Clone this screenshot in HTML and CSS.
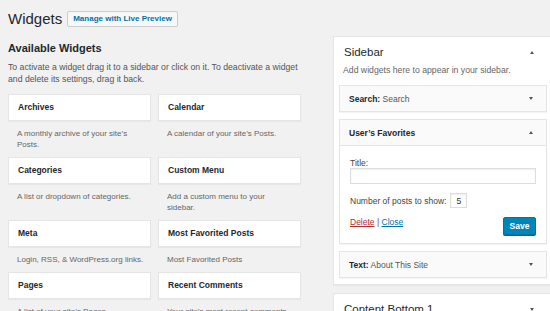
FILE: index.html
```html
<!DOCTYPE html>
<html lang="en">
<head>
    <meta charset="UTF-8">
    <meta name="viewport" content="width=device-width, initial-scale=1.0">
    <title>Widgets</title>
    <link rel="stylesheet" href="styles.css">
</head>
<body>
    <div class="wrap">
        <div class="page-header">
            <h1>Widgets</h1>
            <a class="header-button" href="#">Manage with Live Preview</a>
        </div>

        <div class="columns">
            <div class="available">
                <h2>Available Widgets</h2>
                <p class="intro">To activate a widget drag it to a sidebar or click on it. To deactivate a widget and delete its settings, drag it back.</p>

                <div class="widget-grid">
                    <div class="widget-item">
                        <div class="tile">Archives</div>
                        <p class="tile-desc">A monthly archive of your site’s Posts.</p>
                    </div>
                    <div class="widget-item">
                        <div class="tile">Calendar</div>
                        <p class="tile-desc">A calendar of your site’s Posts.</p>
                    </div>
                    <div class="widget-item">
                        <div class="tile">Categories</div>
                        <p class="tile-desc">A list or dropdown of categories.</p>
                    </div>
                    <div class="widget-item">
                        <div class="tile">Custom Menu</div>
                        <p class="tile-desc">Add a custom menu to your sidebar.</p>
                    </div>
                    <div class="widget-item">
                        <div class="tile">Meta</div>
                        <p class="tile-desc">Login, RSS, &amp; WordPress.org links.</p>
                    </div>
                    <div class="widget-item">
                        <div class="tile">Most Favorited Posts</div>
                        <p class="tile-desc">Most Favorited Posts</p>
                    </div>
                    <div class="widget-item">
                        <div class="tile">Pages</div>
                        <p class="tile-desc">A list of your site’s Pages.</p>
                    </div>
                    <div class="widget-item">
                        <div class="tile">Recent Comments</div>
                        <p class="tile-desc">Your site’s most recent comments.</p>
                    </div>
                </div>
            </div>

            <div class="sidebars">
                <div class="sidebar-panel">
                    <div class="panel-title">
                        <h2>Sidebar</h2>
                        <span class="arrow up"></span>
                    </div>
                    <p class="panel-desc">Add widgets here to appear in your sidebar.</p>

                    <div class="widget">
                        <div class="widget-top">
                            <span><b>Search:</b> Search</span>
                            <span class="arrow down"></span>
                        </div>
                    </div>

                    <div class="widget open">
                        <div class="widget-top">
                            <span><b>User’s Favorites</b></span>
                            <span class="arrow up"></span>
                        </div>
                        <div class="widget-inside">
                            <label class="field-label" for="fav-title">Title:</label>
                            <input class="text-input" type="text" id="fav-title">
                            <div class="number-row">
                                <label for="fav-count">Number of posts to show:</label>
                                <input class="small-input" type="text" id="fav-count" value="5">
                            </div>
                            <div class="widget-actions">
                                <div class="links">
                                    <a class="delete" href="#">Delete</a> | <a class="close" href="#">Close</a>
                                </div>
                                <button class="save-button">Save</button>
                            </div>
                        </div>
                    </div>

                    <div class="widget">
                        <div class="widget-top">
                            <span><b>Text:</b> About This Site</span>
                            <span class="arrow down"></span>
                        </div>
                    </div>
                </div>

                <div class="sidebar-panel">
                    <div class="panel-title">
                        <h2>Content Bottom 1</h2>
                        <span class="arrow down"></span>
                    </div>
                </div>
            </div>
        </div>
    </div>
</body>
</html>
```

FILE: styles.css
```css
html, body {
    margin: 0;
    padding: 0;
    overflow: hidden;
}

body {
    font-family: 'Liberation Sans', Arial, sans-serif;
    background-color: #f1f1f1;
    color: #444;
    font-size: 8.5px;
}

.wrap {
    width: 560px;
    padding-left: 8px;
}

.page-header {
    display: flex;
    align-items: center;
    gap: 5px;
    padding-top: 10px;
    height: 17px;
}

.page-header h1 {
    margin: 0;
    font-size: 15px;
    font-weight: normal;
    line-height: 17px;
    color: #23282d;
}

.header-button {
    display: inline-block;
    height: 14px;
    line-height: 14px;
    padding: 0 5px;
    border: 1px solid #ccc;
    border-radius: 2px;
    background-color: #f7f7f7;
    color: #0073aa;
    font-weight: bold;
    font-size: 8px;
    text-decoration: none;
}

.columns {
    display: flex;
    gap: 32px;
    align-items: flex-start;
}

.available {
    width: 293px;
}

.available h2 {
    margin: 14px 0 0;
    font-size: 11px;
    line-height: 14px;
    color: #23282d;
}

.intro {
    margin: 6px 0 0;
    font-size: 8.7px;
    line-height: 12px;
    color: #555;
}

.widget-grid {
    display: grid;
    grid-template-columns: 143px 143px;
    column-gap: 7px;
    align-items: start;
    margin-top: 9px;
}

.tile {
    height: 25px;
    line-height: 25px;
    padding: 0 9px;
    background-color: #fff;
    border: 1px solid #e5e5e5;
    box-shadow: 0 1px 1px rgba(0, 0, 0, 0.04);
    font-weight: bold;
    font-size: 8.5px;
    color: #23282d;
}

.tile-desc {
    width: 126.5px;
    margin: 7px 0;
    padding-left: 9px;
    font-size: 8px;
    line-height: 11px;
    color: #666;
}

.sidebars {
    width: 219px;
    margin-top: 9px;
}

.sidebar-panel {
    background-color: #fff;
    border: 1px solid #e5e5e5;
    border-right: none;
    box-shadow: 0 1px 1px rgba(0, 0, 0, 0.04);
    padding: 0 5px 6px;
    margin-bottom: 8px;
}

.panel-title {
    display: flex;
    justify-content: space-between;
    align-items: center;
    padding: 7px 13px 0 5px;
}

.panel-title h2 {
    margin: 0;
    font-size: 11.5px;
    font-weight: normal;
    line-height: 16px;
    color: #23282d;
}

.panel-desc {
    margin: 4px 0 9px;
    padding-left: 4px;
    font-size: 8.7px;
    line-height: 12px;
    color: #666;
}

.widget {
    background-color: #fff;
    border: 1px solid #e5e5e5;
    box-shadow: 0 1px 1px rgba(0, 0, 0, 0.04);
    margin-bottom: 7px;
}

.widget:last-child {
    margin-bottom: 0;
}

.widget-top {
    display: flex;
    justify-content: space-between;
    align-items: center;
    height: 25px;
    padding: 0 13px 0 9px;
    background-color: #fafafa;
    font-size: 8.5px;
    color: #23282d;
}

.widget-top span {
    color: #555;
}

.widget-top b {
    color: #23282d;
}

.open .widget-top {
    border-bottom: 1px solid #e5e5e5;
}

.widget-inside {
    padding: 12px 10px 8px;
}

.field-label {
    display: block;
    line-height: 10px;
    color: #444;
}

.text-input {
    display: block;
    box-sizing: border-box;
    width: 100%;
    height: 16px;
    margin: 0;
    border: 1px solid #ddd;
    box-shadow: inset 0 1px 2px rgba(0, 0, 0, 0.07);
    background-color: #fff;
}

.number-row {
    display: flex;
    align-items: center;
    gap: 4px;
    height: 15px;
    margin-top: 9px;
    color: #444;
}

.small-input {
    box-sizing: border-box;
    width: 17px;
    height: 15px;
    margin: 0;
    padding: 0 0 0 5px;
    border: 1px solid #ddd;
    box-shadow: inset 0 1px 2px rgba(0, 0, 0, 0.07);
    font-family: inherit;
    font-size: 8.5px;
    color: #32373c;
}

.widget-actions {
    display: flex;
    justify-content: space-between;
    align-items: flex-start;
    margin-top: 9px;
}

.links {
    line-height: 11px;
    color: #555;
}

.links a {
    text-decoration: underline;
}

.delete {
    color: #b32d2e;
}

.close {
    color: #0073aa;
}

.save-button {
    width: 33px;
    height: 18px;
    padding: 0;
    border: 1px solid #0073aa;
    border-radius: 2px;
    background-color: #0085ba;
    box-shadow: 0 1px 0 #006799;
    color: #fff;
    font-family: inherit;
    font-size: 8.5px;
    font-weight: bold;
}

.arrow {
    width: 0;
    height: 0;
    border-left: 2.5px solid transparent;
    border-right: 2.5px solid transparent;
}

.arrow.up {
    border-bottom: 3px solid #555;
}

.arrow.down {
    border-top: 3px solid #555;
}
```
